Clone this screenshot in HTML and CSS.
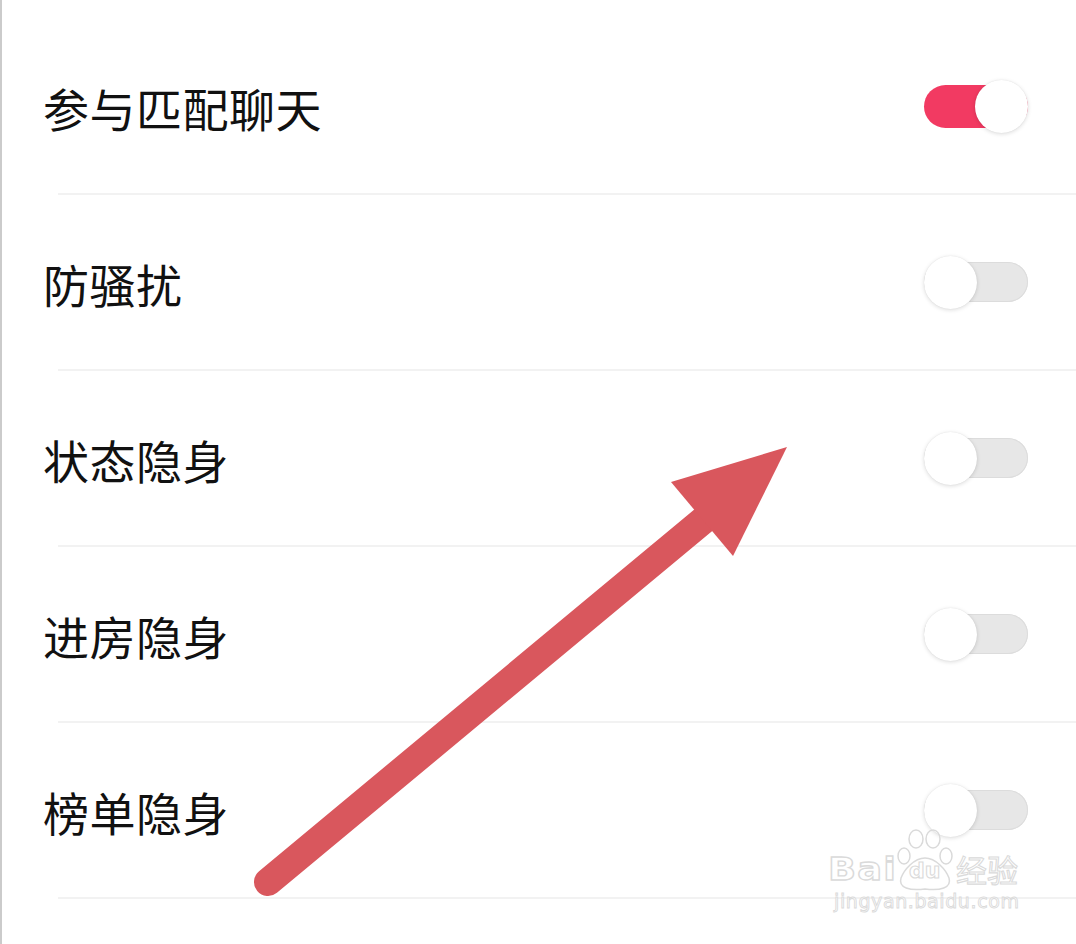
FILE: index.html
```html
<!DOCTYPE html>
<html>
    <head>
        <meta charset="utf-8">
        <title>隐私设置</title>
        <link rel="stylesheet" href="styles.css">
    </head>
    <body>
        <div class="page">
            <div class="list">
                <div class="row">
                    <span class="label">参与匹配聊天</span>
                    <div class="switch on"><div class="track"><div class="knob"></div></div></div>
                </div>
                <div class="row">
                    <span class="label">防骚扰</span>
                    <div class="switch"><div class="track"><div class="knob"></div></div></div>
                </div>
                <div class="row">
                    <span class="label">状态隐身</span>
                    <div class="switch"><div class="track"><div class="knob"></div></div></div>
                </div>
                <div class="row">
                    <span class="label">进房隐身</span>
                    <div class="switch"><div class="track"><div class="knob"></div></div></div>
                </div>
                <div class="row">
                    <span class="label">榜单隐身</span>
                    <div class="switch"><div class="track"><div class="knob"></div></div></div>
                </div>
            </div>

            <!-- 화살표 표시 -->
            <svg class="arrow" width="1076" height="944" viewBox="0 0 1076 944">
                <line x1="268" y1="882" x2="706" y2="518" stroke="#d9575d" stroke-width="28" stroke-linecap="round"/>
                <polygon points="787,447 671,482 733,556" fill="#d9575d"/>
            </svg>

            <!-- 워터마크 -->
            <div class="watermark">
                <div class="wm-top">
                    <span class="wm-bai">Bai</span>
                    <span class="wm-paw">
                        <svg width="58" height="66" viewBox="0 0 58 66">
                            <g fill="none" stroke="#dadada" stroke-width="1.5">
                                <ellipse cx="8" cy="30" rx="6" ry="8"/>
                                <ellipse cx="20" cy="13" rx="7" ry="9"/>
                                <ellipse cx="37" cy="13" rx="7" ry="9"/>
                                <ellipse cx="50" cy="30" rx="6" ry="8"/>
                                <path d="M29 32 C18 32 8 44 5 52 C2 62 14 65 29 63 C44 65 56 62 53 52 C50 44 40 32 29 32 Z"/>
                            </g>
                        </svg>
                        <span class="wm-du">du</span>
                    </span>
                    <span class="wm-jy">经验</span>
                </div>
                <div class="wm-url">jingyan.baidu.com</div>
            </div>
        </div>
    </body>
</html>
```

FILE: styles.css
```css
body {
    margin: 0;
    background: #fff;
}
.page {
    position: relative;
    width: 1076px;
    height: 944px;
    overflow: hidden;
    border-left: 2px solid #cbcbcb;/* 왼쪽 회색 선 */
    box-sizing: border-box;
    font-family: "Noto Sans CJK SC", "Noto Sans", sans-serif;
}
.list {
    padding-top: 19px;
}
.row {
    display: flex;
    align-items: center;
    justify-content: space-between;
    height: 174px;
    margin-left: 56px;
    padding-right: 46px;
    border-bottom: 2px solid #f2f2f2;
}
.label {
    margin-left: -15px;
    margin-top: 2px;
    font-size: 46px;
    color: #111;
    letter-spacing: 0.5px;
}
.switch {
    display: flex;
    align-items: center;
    width: 106px;
    height: 54px;
}
.track {
    display: flex;
    align-items: center;
    justify-content: flex-start;
    width: 104px;
    height: 40px;
    border-radius: 20px;
    background: #e7e7e7;
    box-shadow: inset 0 0 0 1px #dcdcdc;
}
.knob {
    flex-shrink: 0;
    width: 53px;
    height: 53px;
    border-radius: 50%;
    background: #fff;
    box-shadow: 0 1px 4px rgba(0, 0, 0, 0.14), 0 0 1px rgba(0, 0, 0, 0.1);
}
.switch.on .track {
    justify-content: flex-end;
    height: 43px;
    border-radius: 22px;
    background: #f23a62;
    box-shadow: none;
}
.arrow {
    position: absolute;
    left: -2px;
    top: 0;
}
.watermark {
    position: absolute;
    left: 822px;
    top: 826px;
    width: 210px;
    color: #fff;
    font-family: "DejaVu Sans", sans-serif;
}
.wm-top {
    display: flex;
    align-items: flex-end;
    height: 62px;
}
.wm-bai {
    width: 68px;
    font-size: 32px;
    font-weight: bold;
    letter-spacing: 1px;
    line-height: 30px;
    margin-left: 4px;
    margin-bottom: 4px;
    transform: scaleX(1.15);
    transform-origin: left;
    -webkit-text-stroke: 1.3px #dadada;
    color: #fff;
}
.wm-paw {
    position: relative;
    width: 58px;
    height: 66px;
    margin-bottom: -4px;
}
.wm-du {
    position: absolute;
    left: 13px;
    top: 34px;
    font-size: 22px;
    line-height: 22px;
    font-weight: bold;
    -webkit-text-stroke: 1.1px #dadada;
    color: #fff;
}
.wm-jy {
    font-family: "Noto Sans CJK SC", sans-serif;
    font-size: 31px;
    line-height: 30px;
    margin-left: 2px;
    margin-bottom: 4px;
    -webkit-text-stroke: 1.1px #dadada;
    color: #fff;
}
.wm-url {
    margin-top: 3px;
    margin-left: 10px;
    font-size: 19px;
    line-height: 20px;
    letter-spacing: 0.6px;
    -webkit-text-stroke: 0.9px #dadada;
    color: #fff;
}
```
